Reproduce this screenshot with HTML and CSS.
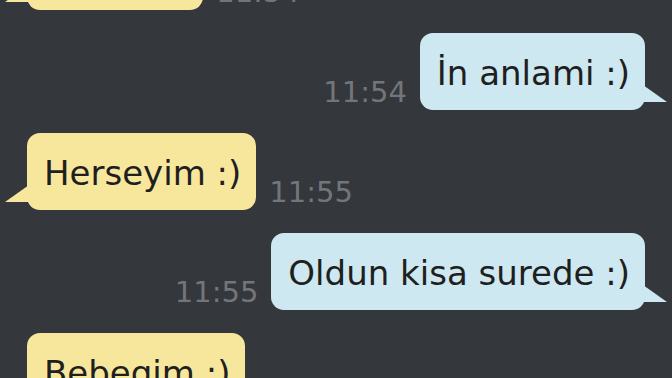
FILE: index.html
```html
<!DOCTYPE html>
<html lang="tr">
  <head>
    <meta charset="UTF-8" />
    <title>Sohbet</title>
    <link rel="stylesheet" href="styles.css">
  </head>
  <body>
    <div class="chat">
      <div class="row in">
        <div class="bubble">Canim :)</div>
        <span class="time">11:54</span>
      </div>

      <div class="row out">
        <span class="time">11:54</span>
        <div class="bubble">İn anlami :)</div>
      </div>

      <div class="row in">
        <div class="bubble">Herseyim :)</div>
        <span class="time">11:55</span>
      </div>

      <div class="row out">
        <span class="time">11:55</span>
        <div class="bubble">Oldun kisa surede :)</div>
      </div>

      <div class="row in">
        <div class="bubble">Bebegim :)</div>
        <span class="time">11:56</span>
      </div>
    </div>
  </body>
</html>
```

FILE: styles.css
```css
html,
body {
  margin: 0;
  height: 100%;
  overflow: hidden;
  background-color: #34373c;
}
.chat {
  display: flex;
  flex-direction: column;
  gap: 23px;
  padding: 0 27px;
  margin-top: -67px;
  font-family: "DejaVu Sans", sans-serif;
}
.row {
  display: flex;
  align-items: flex-end;
  gap: 13px;
}
.row.out {
  justify-content: flex-end;
}
.bubble {
  position: relative;
  font-size: 34px;
  line-height: 40px;
  padding: 20px 15px 17px 17px;
  border-radius: 13px;
  color: #1f1f1f;
  white-space: nowrap;
}
.in .bubble {
  background-color: #f7e79c;
}
.out .bubble {
  background-color: #cde8f0;
}
.bubble::after {
  content: "";
  position: absolute;
  bottom: 8px;
  width: 24px;
  height: 17px;
}
.out .bubble::after {
  right: -22px;
  background-color: #cde8f0;
  clip-path: polygon(0 0, 100% 100%, 0 100%);
}
.in .bubble::after {
  left: -22px;
  background-color: #f7e79c;
  clip-path: polygon(100% 0, 100% 100%, 0 100%);
}
.time {
  font-size: 29px;
  line-height: 32px;
  color: #72767b;
  padding-bottom: 2px;
}
```
